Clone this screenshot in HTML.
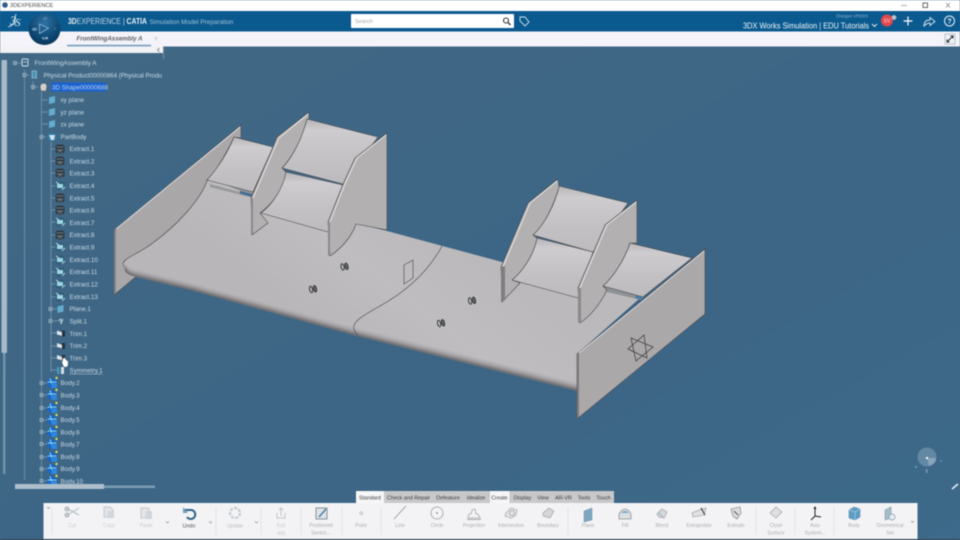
<!DOCTYPE html>
<html><head><meta charset="utf-8"><title>3DEXPERIENCE</title>
<style>
html,body{margin:0;padding:0;width:960px;height:540px;overflow:hidden;background:#3e6786}
svg{display:block;filter:blur(.45px);font-family:"Liberation Sans",sans-serif}
.t{font-size:6.3px;fill:#cbd9e3}
.l{font-size:5px;fill:#aeaeb0;text-anchor:middle}
.tb{font-size:5.4px;fill:#3c3c40;text-anchor:middle}
.e{stroke:#44474c;stroke-width:.6;stroke-linejoin:round}
.i{fill:none;stroke:#a9adb2;stroke-width:1}
</style></head><body>
<svg width="960" height="540" viewBox="0 0 960 540" xmlns="http://www.w3.org/2000/svg">
<defs>
<linearGradient id="bg" x1="0" y1="0" x2="1" y2="1"><stop offset="0" stop-color="#426a86"/><stop offset=".55" stop-color="#3d6585"/><stop offset="1" stop-color="#3d6a8a"/></linearGradient>
<linearGradient id="main" gradientUnits="userSpaceOnUse" x1="300" y1="320" x2="400" y2="190"><stop offset="0" stop-color="#b8b6b8"/><stop offset=".5" stop-color="#bfbdbf"/><stop offset="1" stop-color="#bbb9bb"/></linearGradient>
<linearGradient id="wing" x1="0" y1="0" x2="0" y2="1"><stop offset="0" stop-color="#b8b6b8"/><stop offset=".18" stop-color="#cecccf"/><stop offset=".6" stop-color="#c3c1c3"/><stop offset="1" stop-color="#bdbbbd"/></linearGradient>
<radialGradient id="ball" cx=".5" cy=".3" r=".75"><stop offset="0" stop-color="#2f72a3"/><stop offset=".65" stop-color="#0c4672"/><stop offset="1" stop-color="#0a3252"/></radialGradient>
<path id="lipline" d="M125 269Q127 274 134 275.500L190 289L355 334.500L577 390" fill="none" stroke-width="1.900"/>
<g id="xd"><rect x="-4.5" y="-4.500" width="9" height="9" rx="2.500" fill="#2f3a42"/><path d="M-3.5-2h7M-3.5 1h7M-2 4l2-3 2 3" stroke="#7f8c95" stroke-width=".7" fill="none"/></g>
<g id="xl"><rect x="-4.5" y="-4.500" width="9" height="9" rx="2.500" fill="#2e5f7c"/><rect x="-3" y="-2" width="6" height="4" fill="#9fd6e4"/><path d="M-4-4l3 2M2 4l3-3" stroke="#dbe7ee" stroke-width=".8"/></g>
<g id="bd"><circle r="5" fill="#1768c8"/><path d="M-4.500-1h9M-2-4.500l3 9" stroke="#8fd4ea" stroke-width="1.100"/><rect x="-.5" y="0" width="5.500" height="5" fill="#2f86dc"/><circle cx="4.500" cy="-5" r="1.200" fill="#e5e24f"/></g>
<g id="pl"><path d="M-3-2.5L3-4V2.5L-3 4Z" fill="#63add0"/></g>
<g id="tr"><path d="M-4-3L4 0V3L-4 1Z" fill="#dfe5ea"/><path d="M1-3l3 0v6h-3Z" fill="#26323c"/></g>
<g id="pm"><rect x="-2" y="-2" width="4" height="4" fill="#8aa5b8"/><path d="M-1.3 0h2.6" stroke="#4d7088" stroke-width=".6"/></g>
<g id="clip"><ellipse cx="-2" cy="0" rx="1.500" ry="3.300" transform="rotate(-14)" fill="none" stroke="#2b2d30" stroke-width=".9"/><ellipse cx="2" cy=".3" rx="1.500" ry="3.300" transform="rotate(-14)" fill="#6d6c6e" stroke="#2b2d30" stroke-width=".9"/></g>
</defs>

<rect width="960" height="540" fill="url(#bg)"/>

<!-- 3D model -->
<g>
<path d="M207 180L253 192V198L207 186Z" fill="#8f9295"/>
<!-- main surface -->
<path d="M123 263L160 225L210 178L252 196L387 231L502 262L578 286L640 298L577 354V390L355 335L190 289L132 275Q122 271 123 263Z" fill="url(#main)"/>
<path d="M210 184L253 195.500V198L210 187Z" fill="#98999b"/>
<path d="M240 191L253 194.500V197L240 193.500Z" fill="#3c6a93"/>
<path d="M603 286L641 296V300L603 291Z" fill="#8f9295"/>
<path d="M636 295l8 2-2 3-7-2Z" fill="#4a7da5"/>
<!-- left end plate -->
<path d="M114 230L241 125V138L234 137C226 155 213 175 207 181C200 200 178 225 150 245C134 256 124 258 123 264Q124 271 138 275L114 295Z" fill="#aaa7a8" class="e"/>
<path d="M116 229L240 127" stroke="#dcdbdc" stroke-width="1"/>
<path d="M114 230V295L116 293V229Z" fill="#85848a"/>
<!-- front lip -->
<use href="#lipline" y="-6" stroke="#b5b3b5"/>
<use href="#lipline" y="-4.500" stroke="#aba9ab"/>
<use href="#lipline" y="-3" stroke="#9e9c9e"/>
<use href="#lipline" y="-1.500" stroke="#8b898b"/>
<use href="#lipline" y="0" stroke="#747375"/>
<!-- split curve -->
<path d="M442 246C428 272 405 292 380 306C362 316 352 322 354 329Q355 333 358 335" fill="none" stroke="#44474c" stroke-width=".6"/>
<path d="M404 265L413 260V278L404 284Z" fill="none" stroke="#44474c" stroke-width=".6"/>
<use href="#clip" x="344.500" y="266.500"/><use href="#clip" x="313" y="289"/><use href="#clip" x="472" y="300.500"/><use href="#clip" x="441" y="323"/>

<!-- left upper wing -->
<path d="M234 137L273 147L253 192L207 180C218 168 228 152 234 137Z" fill="url(#wing)" class="e"/>
<!-- wing 2 upper & lower -->
<path d="M307 119L378 137L343 184L282 168C295 155 302 135 307 119Z" fill="url(#wing)" class="e"/>
<path d="M286 172L343 185L328 232L261 213C274 203 282 188 286 172Z" fill="url(#wing)" class="e"/>
<!-- plate 1 -->
<path d="M251 198L273 147L277 137L309 112V119L307 119C302 138 294 155 282 168L286 172C283 188 274 203 260 213L268 223L252 235Z" fill="#b2b0b1" class="e"/>
<path d="M253 198L275 147L279 138L308 114" fill="none" stroke="#e9e9e9" stroke-width=".9"/>
<path d="M251 198V235L253 234V198Z" fill="#8a898b"/>
<!-- plate 2 -->
<path d="M328 222L343 184L355 158L387 133V230L356 224C352 236 342 248 330 256Z" fill="#b2b0b1" class="e"/>
<path d="M330 222L345 184L357 158L386 135" fill="none" stroke="#e9e9e9" stroke-width=".9"/>
<path d="M328 222V256L330 255V222Z" fill="#8a898b"/>

<!-- right wing 3 upper & lower -->
<path d="M559 186L628 203L593 252L533 235C546 222 555 204 559 186Z" fill="url(#wing)" class="e"/>
<path d="M537 238L593 252L578 298L512 280C524 270 534 254 537 238Z" fill="url(#wing)" class="e"/>
<!-- rear wing -->
<path d="M630 243L692 258L643 297L603 286C615 275 625 258 630 243Z" fill="url(#wing)" class="e"/>
<!-- plate 3 -->
<path d="M501 267L528 203L558 179L559 187C554 205 545 224 533 235L537 238C534 254 524 270 512 280L520 283L502 302Z" fill="#b2b0b1" class="e"/>
<path d="M503 267L530 203L557 181" fill="none" stroke="#e9e9e9" stroke-width=".9"/>
<path d="M501 267V302L505 300V266Z" fill="#7f7e80"/>
<!-- plate 4 -->
<path d="M578 288L605 225L637 200V243L630 243C625 258 615 275 603 286L607 290C600 304 592 315 580 323Z" fill="#b2b0b1" class="e"/>
<path d="M580 288L607 225L636 202" fill="none" stroke="#e9e9e9" stroke-width=".9"/>
<path d="M578 288V323L581 321V288Z" fill="#8a898b"/>
<!-- right end plate -->
<path d="M577 354L705 249V314L577 419Z" fill="#aaa8a9" class="e"/>
<path d="M579 353L704 251" stroke="#dfdedf" stroke-width=".9"/>
<path d="M577 354V419L579 417V353Z" fill="#7b7b7e"/>
<!-- axis star -->
<g fill="none" stroke="#33363a" stroke-width=".7"><path d="M631 338L653 347L636 361Z"/><path d="M644 335L647 358L628 349Z"/></g>
</g>

<!-- top bars -->
<rect width="960" height="11" fill="#fff"/>
<circle cx="5" cy="5" r="2.800" fill="#2c5f8a"/>
<text x="10" y="7" font-size="5.600" fill="#4a4a4a">3DEXPERIENCE</text>
<path d="M901 5.500h6" stroke="#999" stroke-width=".8"/>
<rect x="923" y="3" width="4.500" height="4.500" fill="none" stroke="#444" stroke-width=".8"/>
<path d="M946 3l4 4.500m0-4.500l-4 4.500" stroke="#888" stroke-width=".7"/>
<rect y="11" width="960" height="20.500" fill="#0b5a8f"/>
<rect y="31.500" width="960" height="15" fill="#f3f3f9"/>
<rect x="67" y="44.800" width="84" height="1.500" fill="#6d97ba"/>
<text x="109.500" y="40.500" font-size="6.200" font-weight="bold" font-style="italic" fill="#606165" text-anchor="middle">FrontWingAssembly A</text>
<text x="156" y="41" font-size="8" fill="#c3c6cb" text-anchor="middle">+</text>

<!-- DS logo -->
<text x="10" y="25" font-size="13" font-family="'Liberation Serif',serif" font-style="italic" fill="#e8f0f6">3</text>
<path d="M8 27q5-1 6-6l2-7" stroke="#e8f0f6" stroke-width=".8" fill="none"/>
<text x="15" y="26" font-size="11" font-family="'Liberation Serif',serif" font-style="italic" fill="#e8f0f6">S</text>

<!-- compass -->
<circle cx="44.500" cy="29" r="16" fill="url(#ball)"/>
<path d="M39.500 24l9 4-9 5.500Z" fill="none" stroke="#8db7d2" stroke-width=".8"/>
<text x="34.500" y="30.500" font-size="4" font-weight="bold" fill="#c4d7e4" text-anchor="middle">3D</text>
<text x="45" y="39.500" font-size="4" font-weight="bold" fill="#dce8f0" text-anchor="middle">V.R</text>
<path d="M43 19l3-2M44.500 20l3-2" stroke="#7da4bf" stroke-width=".6"/>
<text x="55" y="30" font-size="4" fill="#8fb2cb" text-anchor="middle">i</text>

<!-- title -->
<text x="68" y="24" font-size="8" fill="#e8f0f6" textLength="79" lengthAdjust="spacingAndGlyphs"><tspan font-weight="bold">3D</tspan><tspan fill="#c4d7e6">EXPERIENCE</tspan><tspan fill="#e8f0f6"> | </tspan><tspan font-weight="bold">CATIA</tspan></text>
<text x="149.500" y="24" font-size="6.100" fill="#a3c1d6" textLength="84" lengthAdjust="spacingAndGlyphs">Simulation Model Preparation</text>

<!-- search -->
<rect x="351" y="14" width="163" height="14" rx="1" fill="#fff"/>
<text x="355" y="23" font-size="5.600" fill="#a3a3a3">Search</text>
<circle cx="506" cy="20.500" r="2.500" fill="none" stroke="#333" stroke-width="1.100"/><path d="M508 22.500l2.500 2.500" stroke="#333" stroke-width="1.300"/>
<path d="M520 17h5l4 5-4 4-5-5Z" fill="none" stroke="#cfe0ec" stroke-width=".9"/>

<!-- right header -->
<text x="868" y="17.500" font-size="4.300" fill="#8fb4cf" text-anchor="end">Shergen VRIDHI</text>
<text x="743" y="28.500" font-size="7.900" fill="#eef4f8" textLength="126" lengthAdjust="spacingAndGlyphs">3DX Works Simulation | EDU Tutorials</text>
<path d="M872 24l2.500 2.500 2.500-2.500" stroke="#eef4f8" stroke-width=".9" fill="none"/>
<circle cx="887" cy="20.500" r="6" fill="#e2474d"/>
<text x="887" y="22.500" font-size="5" fill="#f7dada" text-anchor="middle">SV</text>
<circle cx="894" cy="17.500" r="2.400" fill="#b8bfc6"/>
<path d="M908 16.500v9M903.500 21h9" stroke="#fff" stroke-width="1.200"/>
<path d="M924 26q0-6 6-6v-2.500l5 4-5 4v-2.500q-3 0-6 3Z" fill="none" stroke="#d9e6ef" stroke-width=".9"/>
<circle cx="949.500" cy="21" r="5" fill="none" stroke="#e8f0f6" stroke-width="1"/>
<text x="949.500" y="23.500" font-size="7" font-weight="bold" fill="#e8f0f6" text-anchor="middle">?</text>

<!-- expand button -->
<rect x="945" y="34" width="10" height="10" fill="#eef0f3" stroke="#8b98a3" stroke-width=".5"/>
<path d="M947 42l6-6M950.500 36h2.500v2.500M947 39.500V42h2.500" stroke="#26323c" stroke-width="1" fill="none"/>

<!-- tree top strip -->
<rect y="46.500" width="163" height="6.500" fill="#f1f2f5"/>
<rect x="163" y="47" width="1" height="12" fill="#7d8e9c"/>
<path d="M159.500 48l-2 2 2 2" stroke="#555" stroke-width=".6" fill="none"/>

<!-- scrollbars -->
<rect x="3" y="353" width="2.500" height="121" fill="#6f93ac"/>
<rect x="1.500" y="60" width="5.500" height="293" rx="1" fill="#a6bac9"/>
<rect x="104" y="485.500" width="51" height="2.500" fill="#7d9db3"/>

<!-- tree lines -->
<g stroke="#7f9fb6" stroke-width=".7" fill="none">
<path d="M24.500 70V480M33 81V90M41.500 92V480M51 142V372"/>
<path d="M17 63h5M24.500 75h5M33 87h5M42 100h6M42 112h6M42 124h6M42 137h4M51 149h6M51 161h6M51 173h6M51 186h6M51 198h6M51 210h6M51 222h6M51 235h6M51 247h6M51 260h6M51 272h6M51 284h6M51 297h6M51 309h6M51 321h6M51 333h6M51 346h6M51 358h6M51 370h6M42 383h5M42 395h5M42 408h5M42 420h5M42 432h5M42 444h5M42 457h5M42 469h5M42 481h5"/>
</g>
<use href="#pm" x="15" y="63"/><use href="#pm" x="24.500" y="75"/><use href="#pm" x="33" y="87"/><use href="#pm" x="41.500" y="137"/>
<use href="#pm" x="50.500" y="309"/><use href="#pm" x="50.500" y="321"/>
<use href="#pm" x="41.500" y="383"/><use href="#pm" x="41.500" y="395"/><use href="#pm" x="41.500" y="408"/><use href="#pm" x="41.500" y="420"/><use href="#pm" x="41.500" y="432"/><use href="#pm" x="41.500" y="444"/><use href="#pm" x="41.500" y="457"/><use href="#pm" x="41.500" y="469"/><use href="#pm" x="41.500" y="481"/>

<!-- tree icons -->
<rect x="22" y="59" width="6" height="7" rx="1" fill="#3e6786" stroke="#d6e2ea" stroke-width=".9"/><path d="M23 62h4" stroke="#d6e2ea" stroke-width=".7"/>
<rect x="32" y="71" width="4.500" height="7" fill="#4c90b4" stroke="#a9d3e4" stroke-width=".6"/>
<path d="M41 84l4-1 2 3-1 5-5 0-1-4Z" fill="#d0cfd0" stroke="#555" stroke-width=".5"/>
<use href="#pl" x="52" y="100"/><use href="#pl" x="52" y="112"/><use href="#pl" x="52" y="124"/>
<circle cx="52" cy="137" r="4.500" fill="#2e7ca5"/><path d="M49 135h6l-1 5h-3Z" fill="#d4e2ea"/>
<use href="#xd" x="60" y="149"/><use href="#xd" x="60" y="161"/><use href="#xd" x="60" y="173"/><use href="#xl" x="60" y="186"/><use href="#xd" x="60" y="198"/><use href="#xd" x="60" y="210"/><use href="#xl" x="60" y="222"/><use href="#xd" x="60" y="235"/><use href="#xl" x="60" y="247"/><use href="#xl" x="60" y="260"/><use href="#xl" x="60" y="272"/><use href="#xl" x="60" y="284"/><use href="#xl" x="60" y="297"/>
<use href="#pl" x="60.500" y="309"/>
<path d="M58 321l3-2v5l2-5" stroke="#b9cfdc" stroke-width="1" fill="none"/>
<use href="#tr" x="61" y="333.500"/><use href="#tr" x="61" y="346"/><use href="#tr" x="61" y="358"/>
<rect x="57" y="367" width="2.500" height="7" fill="#3f9ac0"/><rect x="61" y="367" width="3" height="7" fill="#d8dfe4"/>
<use href="#bd" x="52" y="383"/><use href="#bd" x="52" y="395"/><use href="#bd" x="52" y="408"/><use href="#bd" x="52" y="420"/><use href="#bd" x="52" y="432"/><use href="#bd" x="52" y="444"/><use href="#bd" x="52" y="457"/><use href="#bd" x="52" y="469"/><use href="#bd" x="52" y="481"/>

<!-- tree text -->
<rect x="51" y="82.500" width="55" height="9" fill="#1b62cf"/>
<g class="t">
<text class="t" x="34.500" y="65">FrontWingAssembly A</text>
<text class="t" x="43.500" y="77.300" textLength="118.500" lengthAdjust="spacingAndGlyphs">Physical Product00000864 (Physical Produ</text>
<text class="t" x="52" y="89.500" style="fill:#bcd4ee">3D Shape00000688</text>
<text class="t" x="60.500" y="102">xy plane</text>
<text class="t" x="60.500" y="114.500">yz plane</text>
<text class="t" x="60.500" y="126.500">zx plane</text>
<text class="t" x="60.500" y="139">PartBody</text>
<text class="t" x="69.500" y="151">Extract.1</text>
<text class="t" x="69.500" y="163.500">Extract.2</text>
<text class="t" x="69.500" y="175.500">Extract.3</text>
<text class="t" x="69.500" y="188">Extract.4</text>
<text class="t" x="69.500" y="200.500">Extract.5</text>
<text class="t" x="69.500" y="212.500">Extract.6</text>
<text class="t" x="69.500" y="225">Extract.7</text>
<text class="t" x="69.500" y="237">Extract.8</text>
<text class="t" x="69.500" y="249.500">Extract.9</text>
<text class="t" x="69.500" y="262">Extract.10</text>
<text class="t" x="69.500" y="274">Extract.11</text>
<text class="t" x="69.500" y="286.500">Extract.12</text>
<text class="t" x="69.500" y="299">Extract.13</text>
<text class="t" x="69.500" y="311">Plane.1</text>
<text class="t" x="69.500" y="323.500">Split.1</text>
<text class="t" x="69.500" y="336">Trim.1</text>
<text class="t" x="69.500" y="348">Trim.2</text>
<text class="t" x="69.500" y="360.500">Trim.3</text>
<text class="t" x="69.500" y="372.500">Symmetry.1</text>
<path d="M69.500 374h33" stroke="#cbd9e3" stroke-width=".5"/>
<text class="t" x="60.500" y="385">Body.2</text>
<text class="t" x="60.500" y="397.500">Body.3</text>
<text class="t" x="60.500" y="410">Body.4</text>
<text class="t" x="60.500" y="422">Body.5</text>
<text class="t" x="60.500" y="434.500">Body.6</text>
<text class="t" x="60.500" y="446.500">Body.7</text>
<text class="t" x="60.500" y="459">Body.8</text>
<text class="t" x="60.500" y="471">Body.9</text>
<text class="t" x="60.500" y="483.500">Body.10</text>
</g>
<!-- horizontal scrollbar thumb, over the last tree row -->
<rect x="15" y="484" width="89" height="5" fill="#aebfcb"/>
<!-- hand cursor -->
<path d="M63 358h2l1 2 2 1v4l-1 2h-3l-2-4Z" fill="#fff" stroke="#555" stroke-width=".3"/>

<!-- compass bottom right -->
<ellipse cx="927" cy="457" rx="9.500" ry="9.500" fill="#7d9db5" opacity=".6"/>
<path d="M927 458h9q0 6-7 8Z" fill="#a2b8c8" opacity=".6"/>
<rect x="926" y="457" width="2" height="2" fill="#fff"/>
<circle cx="916" cy="467" r=".9" fill="#7fb0cc"/><circle cx="941" cy="461" r=".8" fill="#7fb0cc"/><rect x="926" y="469" width="1.500" height="4" fill="#7b9cb4"/>
<path d="M952 489l6-5" stroke="#e8eef2" stroke-width="1.600"/>

<!-- ribbon tabs -->
<rect x="356" y="491" width="258" height="12" fill="#c8c8ca"/>
<rect x="356" y="491" width="28" height="12" fill="#f6f6f7"/>
<rect x="490" y="491" width="19.500" height="12" fill="#f6f6f7"/>
<text class="tb" x="370" y="499.500">Standard</text>
<text class="tb" x="408.500" y="499.500">Check and Repair</text>
<text class="tb" x="448" y="499.500">Defeature</text>
<text class="tb" x="476" y="499.500">Idealize</text>
<text class="tb" x="499.500" y="499.500">Create</text>
<text class="tb" x="522.500" y="499.500">Display</text>
<text class="tb" x="543" y="499.500">View</text>
<text class="tb" x="563.500" y="499.500">AR-VR</text>
<text class="tb" x="584" y="499.500">Tools</text>
<text class="tb" x="603.500" y="499.500">Touch</text>

<!-- ribbon -->
<rect x="43.500" y="503" width="874" height="36" fill="#f3f3f5"/>
<rect x="0" y="539" width="960" height="1" fill="#3a4650"/>
<g stroke="#e2e2e4" stroke-width=".8"><path d="M52 507v28M216 507v28M261 507v28M301 507v28M342 507v28M381 507v28M568 507v28M756 507v28M795 507v28M834 507v28"/></g>
<path d="M47 507l1.500 1.500L50 507M166 521.500l1.500 1.500 1.500-1.500M209 521.500l1.500 1.500 1.500-1.500M255 521.500l1.500 1.500 1.500-1.500M911 521l1.500 1.500 1.500-1.500" stroke="#8f8f92" stroke-width=".7" fill="none"/>

<!-- ribbon icons -->
<g class="i" fill="none">
<path d="M66 508l13 7M66 516l13-8" stroke="#b6bcc2"/><circle cx="67" cy="509" r="2" fill="#c4c9ce" stroke="#aeb4ba"/><circle cx="67" cy="515" r="2" fill="#c4c9ce" stroke="#aeb4ba"/>
<path d="M104 507h6l3 3v7h-9Z" fill="#e3e5e8" stroke="#c5c8cc"/><rect x="108" y="511" width="6" height="7" fill="#cfd6dc" stroke="none"/>
<rect x="141" y="508" width="8" height="10" fill="#e3e5e8" stroke="#c5c8cc"/><rect x="146" y="511" width="6" height="8" fill="#cfd6dc" stroke="none"/>
<path d="M184 510h7a4.500 4.500 0 1 1-4 7" stroke="#2f5f86" stroke-width="2"/><path d="M183 507v6h5Z" fill="#6f9fc6" stroke="none"/>
<circle cx="235" cy="513" r="5" stroke="#c3c8cd" stroke-width="2.200" stroke-dasharray="3 1.500"/>
<path d="M277 513v5h8v-5M281 516v-8M279 510l2-2 2 2" stroke="#bfc3c8"/>
<rect x="316" y="508" width="11" height="11" fill="#dde3e8" stroke="#8b9299"/><path d="M319 517l7-8" stroke="#4c7ea5" stroke-width="1.500"/>
<rect x="360" y="512" width="2.500" height="2.500" stroke="#a6a8ab" stroke-width=".6"/>
<path d="M394 519l12-13" stroke="#8e9297" stroke-width=".8"/>
<circle cx="437" cy="513" r="6" stroke="#9a9ea3" stroke-width=".8"/><circle cx="437" cy="513" r=".8" fill="#777" stroke="none"/>
<path d="M468 518h12l-2-4h-2l-1-5-3 1-1 4h-2Z" stroke="#a3a6a9" stroke-width=".8"/><path d="M467 519.500h14" stroke="#a3a6a9"/>
<path d="M506 513l5-5 6 2-1 5-5 3-6-2Z" fill="#e5e6e8" stroke="#a7aaad" stroke-width=".8"/><circle cx="512" cy="513" r="2.500" stroke="#9a9da0" stroke-width=".7"/>
<path d="M543 513l6-5 5 3-4 7-7-2Z" fill="#d4d5d7" stroke="#9fa2a5" stroke-width=".7"/>
<path d="M584 511l8-3v12l-8 2Z" fill="#7fa7c0" stroke="#6c95ae" stroke-width=".5"/>
<path d="M619 514q6-10 12 0v5h-12Z" fill="#dce0e3" stroke="#8f9498" stroke-width=".8"/><path d="M621 513q4-4 8 0Z" fill="#78a5c9" stroke="none"/>
<path d="M657 514l5-5 5 3-3 6-5-1Z" fill="#d8d9db" stroke="#9da0a3" stroke-width=".7"/><path d="M658 512l5 5" stroke="#9ab9cd"/>
<path d="M692 513l10-4 4-1-2 7-11 2Z" fill="#e1e2e4" stroke="#9fa2a5" stroke-width=".7"/><path d="M701 508l4 7" stroke="#333" stroke-width="1"/>
<path d="M731 509l9-2 1 6-4 6-4-3Z" fill="#dcdde0" stroke="#8f9498" stroke-width=".8"/><path d="M734 511l4 4" stroke="#555"/>
<path d="M770 513l6-6 6 5-6 6Z" fill="#dedfe1" stroke="#a8abae" stroke-width=".8"/>
<path d="M815 507v9M815 516l6 1M815 516l-4 4" stroke="#222" stroke-width="1"/><path d="M813.500 509l1.500-3 1.500 3Z" fill="#222" stroke="none"/>
<path d="M849 510l5-3 6 2v8l-5 3-6-2Z" fill="#5f9dc4" stroke="#4d88ad" stroke-width=".5"/><path d="M849 510l6 2 5-3M855 512v8" stroke="#a7cde2" stroke-width=".7"/>
<path d="M885 510l6-3v11l-6 2Z" fill="#a6bccb" stroke="#7f99aa" stroke-width=".6"/><circle cx="892" cy="517" r="3" fill="#e8ecef" stroke="#7f99aa" stroke-width=".7"/>
</g>

<!-- ribbon labels -->
<text class="l" x="72" y="527" style="fill:#cacacc">Cut</text>
<text class="l" x="109" y="527" style="fill:#cacacc">Copy</text>
<text class="l" x="146" y="527" style="fill:#cacacc">Paste</text>
<text class="l" x="189" y="527.500" style="fill:#55565a;font-size:5.300px">Undo</text>
<text class="l" x="235" y="527.500" style="fill:#bcbcbe">Update</text>
<text class="l" x="281" y="527" style="fill:#cacacc">Exit</text>
<text class="l" x="281" y="534.500" style="fill:#cacacc">app</text>
<text class="l" x="321" y="527">Positioned</text>
<text class="l" x="321" y="534.500">Sketch...</text>
<text class="l" x="361" y="527">Point</text>
<text class="l" x="400" y="527">Line</text>
<text class="l" x="437" y="527">Circle</text>
<text class="l" x="474" y="527">Projection</text>
<text class="l" x="511" y="527">Intersection</text>
<text class="l" x="548" y="527">Boundary</text>
<text class="l" x="588" y="527">Plane</text>
<text class="l" x="625" y="527">Fill</text>
<text class="l" x="662" y="527">Blend</text>
<text class="l" x="699" y="527">Extrapolate</text>
<text class="l" x="736" y="527">Extrude</text>
<text class="l" x="776" y="527">Close</text>
<text class="l" x="776" y="534.500">Surface</text>
<text class="l" x="815" y="527">Axis</text>
<text class="l" x="815" y="534.500">System...</text>
<text class="l" x="854" y="527">Body</text>
<text class="l" x="890" y="527">Geometrical</text>
<text class="l" x="890" y="534.500">Set</text>
</svg>
</body></html>
